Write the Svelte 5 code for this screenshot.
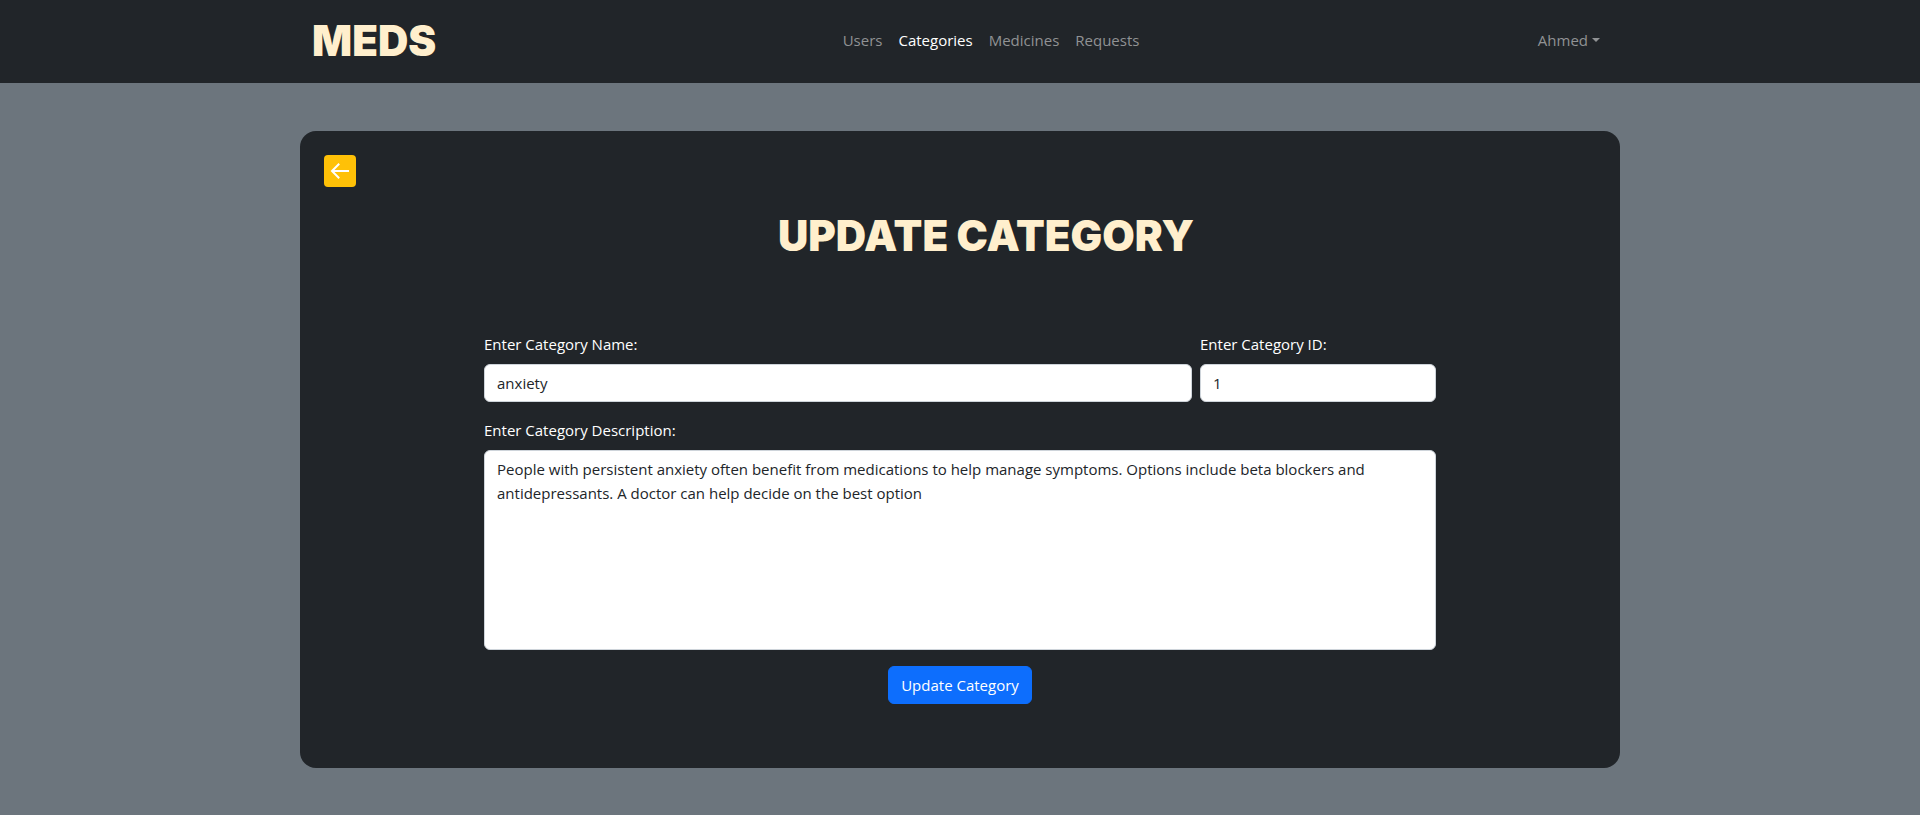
<script lang="ts">
  const links = ['Users', 'Categories', 'Medicines', 'Requests'];
  const active = 'Categories';

  let name = $state('anxiety');
  let id = $state('1');
  let description = $state(
    'People with persistent anxiety often benefit from medications to help manage symptoms. Options include beta blockers and antidepressants. A doctor can help decide on the best option'
  );
</script>

<header>
  <div class="container bar">
    <a class="brand display" href="#home">MEDS</a>
    <nav>
      {#each links as link}
        <a class="link" class:active={link === active} href="#{link.toLowerCase()}">{link}</a>
      {/each}
    </nav>
    <button type="button" class="link account">Ahmed<span class="caret"></span></button>
  </div>
</header>

<main class="container card">
  <div class="heading">
    <a class="back" href="#categories" aria-label="Back">
      <svg viewBox="0 0 32 32" width="32" height="32" fill="none" stroke="#fff" stroke-width="2" aria-hidden="true">
        <path d="M25 16H8.4M15.2 8.8L8 16l7.2 7.2" />
      </svg>
    </a>
    <h1 class="display">UPDATE CATEGORY</h1>
  </div>

  <form onsubmit={(e) => e.preventDefault()}>
    <div class="row">
      <div class="field">
        <label for="name">Enter Category Name:</label>
        <input id="name" type="text" bind:value={name} />
      </div>
      <div class="field">
        <label for="id">Enter Category ID:</label>
        <input id="id" type="text" bind:value={id} />
      </div>
    </div>
    <div class="field">
      <label for="description">Enter Category Description:</label>
      <textarea id="description" spellcheck="false" bind:value={description}></textarea>
    </div>
    <button type="submit" class="submit">Update Category</button>
  </form>
</main>

<style>
  :global(body) {
    background: #6c757d;
    color: #fff;
    font: 15px/24px 'Open Sans', 'Noto Sans', sans-serif;
  }

  * {
    box-sizing: border-box;
  }

  header {
    background: #212529;
    padding: 8px 0;
  }

  .container {
    max-width: 1320px;
    margin: 0 auto;
  }

  .bar {
    display: flex;
    align-items: center;
    justify-content: space-between;
    padding: 3px 12px 4px;
  }

  .display {
    color: #ffefcd;
    font-family: Inter, sans-serif;
    font-size: 42px;
    font-weight: 900;
    line-height: 60px;
  }

  .brand {
    margin-right: 16px;
    text-decoration: none;
  }

  nav {
    display: flex;
  }

  .link {
    padding: 7px 8px 9px;
    color: #909294;
    text-decoration: none;
  }

  .link.active {
    color: #fff;
  }

  .account {
    display: flex;
    align-items: center;
    gap: 4px;
    border: 0;
    background: none;
    font: inherit;
  }

  .caret {
    border: 4px solid transparent;
    border-top-color: currentColor;
    border-bottom: 0;
  }

  .card {
    margin-top: 48px;
    padding: 24px 24px 64px;
    border-radius: 16px;
    background: #212529;
  }

  .heading {
    display: flex;
    align-items: flex-start;
    gap: 20px;
  }

  .back {
    display: flex;
    width: 32px;
    height: 32px;
    border-radius: 4px;
    background: #ffc107;
  }

  h1 {
    flex: 1;
    margin: 51px 0 66px;
    text-align: center;
  }

  form {
    display: flex;
    flex-direction: column;
    gap: 16px;
    max-width: 952px;
    margin: 0 auto;
  }

  .row {
    display: grid;
    grid-template-columns: 3fr 1fr;
    gap: 8px;
  }

  .field {
    display: flex;
    flex-direction: column;
    gap: 8px;
    min-width: 0;
  }

  input,
  textarea {
    width: 100%;
    height: 38px;
    padding: 6px 12px;
    border: 1px solid #ced4da;
    border-radius: 6px;
    background: #fff;
    color: #212529;
    font: inherit;
  }

  textarea {
    display: block;
    height: 200px;
    resize: none;
  }

  .submit {
    align-self: center;
    padding: 6px 12px;
    border: 1px solid #0d6efd;
    border-radius: 6px;
    background: #0d6efd;
    color: #fff;
    font: inherit;
  }
</style>
